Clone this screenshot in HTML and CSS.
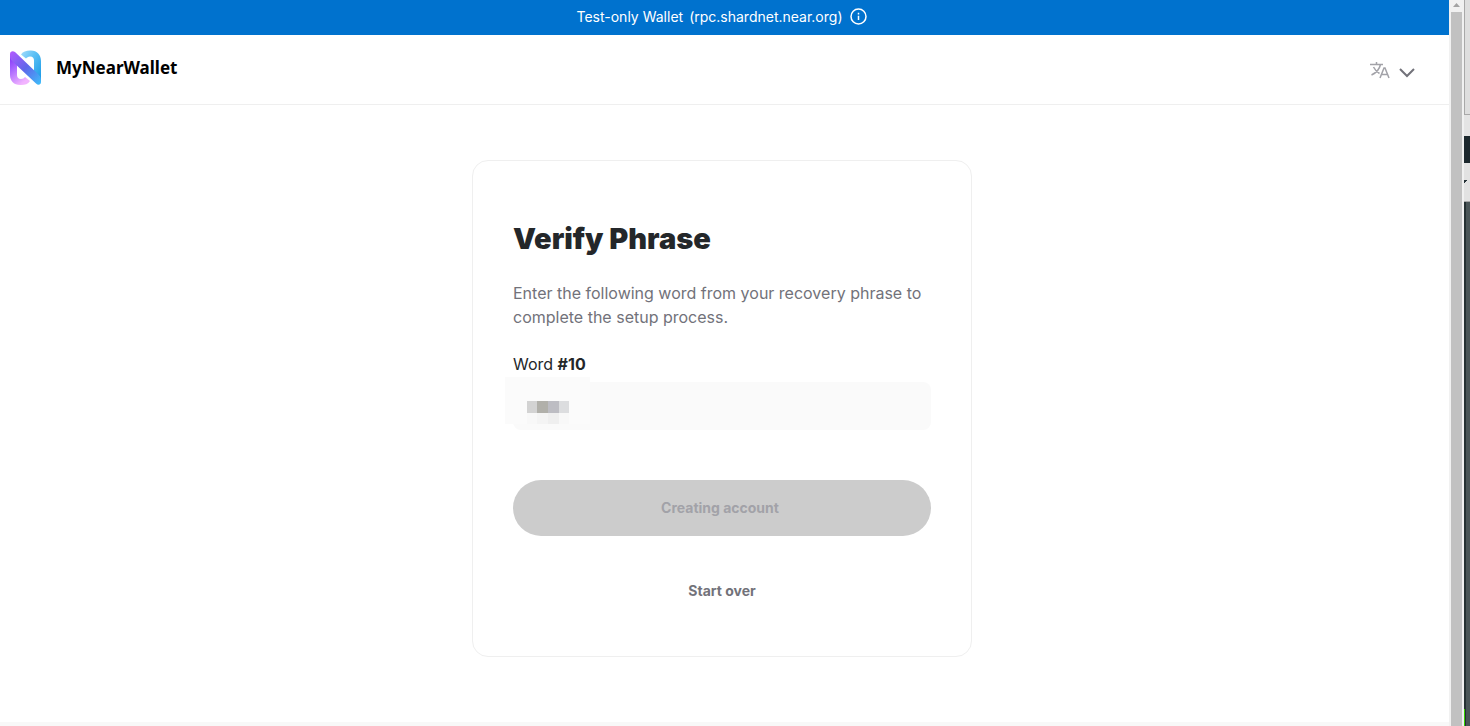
FILE: index.html
```html
<!DOCTYPE html>
<html lang="en">
<head>
<meta charset="utf-8">
<title>MyNearWallet</title>
<link rel="stylesheet" href="styles.css">
</head>
<body>
<div class="window">
  <div class="page">
    <div class="banner">
      <span>Test-only Wallet</span>
      <span>(rpc.shardnet.near.org)</span>
      <svg class="info" viewBox="0 0 18 18" fill="none" stroke="#fff" stroke-width="1.5"><circle cx="8.500" cy="8.500" r="7.500"/><path d="M8.500 7.700V12M8.500 4.800v1.600"/></svg>
    </div>
    <header class="header">
      <a class="brand" href="#">
        <svg class="logo" viewBox="0 0 32 36">
          <defs>
            <linearGradient id="pink" x1="0" y1="0" x2=".5" y2="1"><stop offset="0" stop-color="#7a2cf5"/><stop offset=".45" stop-color="#a968ff"/><stop offset="1" stop-color="#f2b4ff"/></linearGradient>
            <linearGradient id="sky" x1="0" y1="0" x2="1" y2="1"><stop offset="0" stop-color="#a5dcfb"/><stop offset=".4" stop-color="#5bc0f5"/><stop offset="1" stop-color="#1597e5"/></linearGradient>
            <linearGradient id="bar" x1="0" y1="0" x2="1" y2="1"><stop offset="0" stop-color="#b45bff"/><stop offset=".5" stop-color="#5f66ea"/><stop offset="1" stop-color="#3cc0fa"/></linearGradient>
          </defs>
          <path fill="url(#pink)" d="M0 4v21c0 6 4 10 10 10h1c4 0 7-1 9-4l-5-4c-1 1-2 2-4 2-3 0-4-2-4-4V10z"/>
          <path fill="url(#sky)" d="M31 32V11c0-6-4-10.500-10-10.500h-1c-4 0-7 1-9 4l5 4c1-1 2-2 4-2 3 0 4 2 4 4v16z"/>
          <path fill="url(#bar)" d="M0 4c0-3 3-3.500 5-2l24 23c2 2 2 4 2 7 0 3-3 3.500-5 1.500L2 11C0 9 0 7 0 4z"/>
        </svg>
        <span>MyNearWallet</span>
      </a>
      <button class="language" aria-label="Language">
        <svg class="translate" viewBox="0 0 20 18" fill="none" stroke="#a2a2a8" stroke-width="1.500"><path d="M0 3.500h13M6.500 1v2.500M10.500 3.500C9.500 8 6 12 1.500 14M3.500 6c1.500 3 3.500 5 6 6.500M10 17l4-10h1l4 10M11.500 13.500h6"/></svg>
        <svg class="chevron" viewBox="0 0 16 10" fill="none" stroke="#72727a" stroke-width="2"><path d="M1 1l7 7 7-7"/></svg>
      </button>
    </header>
    <main class="main">
      <form class="card">
        <h1>Verify Phrase</h1>
        <p>Enter the following word from your recovery phrase to complete the setup process.</p>
        <label for="word">Word <b>#10</b></label>
        <div class="field">
          <input id="word" type="text">
          <svg class="mosaic" viewBox="0 0 85 47" shape-rendering="crispEdges"><path fill="#fbfbfb" d="M0 0h85v47H0z"/><path fill="#d3d3d3" d="M22 24h10v12H22z"/><path fill="#b1b0aa" d="M32 24h11v12H32z"/><path fill="#bdbdc3" d="M43 24h11v12H43z"/><path fill="#dcdddf" d="M54 24h10v12H54z"/><path fill="#f8f8f8" d="M22 36h42v11H22z"/><path fill="#f4f4f4" d="M32 36h11v11H32z"/><path fill="#efefef" d="M43 36h11v11H43z"/></svg>
        </div>
        <button class="submit" type="submit" disabled>Creating account</button>
        <button class="restart" type="button">Start over</button>
      </form>
    </main>
    <footer class="footer"></footer>
  </div>
  <div class="scrollbar">
    <svg class="up" viewBox="0 0 11 12"><path fill="#a3a3a3" d="M2 7l3.500-4L9 7z"/></svg>
    <div class="thumb"></div>
  </div>
  <div class="desktop">
    <div class="titlebar"></div>
    <div class="toolbar"></div>
    <div class="tabs"></div>
    <div class="menu"><svg viewBox="0 0 6 38"><path fill="#263238" d="M0 17h3v1H2v1H1v1H0z"/></svg></div>
    <div class="terminal"></div>
    <div class="prompt"></div>
  </div>
</div>
</body>
</html>
```
FILE: styles.css
```css
* { box-sizing: border-box; }
body { margin: 0; font-family: Inter, "Liberation Sans", sans-serif; color: #24272a; background: #fff; }
button { border: 0; background: none; font-family: inherit; cursor: pointer; }
svg { display: block; }

.window { display: flex; height: 100vh; overflow: hidden; }
.page { flex: 1; display: flex; flex-direction: column; }

.banner {
  display: flex; align-items: center; justify-content: center; gap: 6px;
  height: 35px; padding: 0 5px 2px 0;
  background: #0072ce; color: #fff; font-size: 14px;
}
.info { width: 18px; height: 18px; margin-left: 1px; }

.header {
  display: flex; align-items: center; justify-content: space-between;
  height: 70px; padding: 0 34px 0 10px; border-bottom: 1px solid #efefef;
}
.brand {
  display: flex; align-items: center; gap: 14px; padding-bottom: 4px;
  color: #000; text-decoration: none; font: 700 17px/24px "Noto Sans", sans-serif;
}
.logo { width: 32px; height: 36px; }
.language { display: flex; align-items: center; gap: 9px; padding: 0; }
.translate { width: 20px; height: 18px; }
.chevron { width: 16px; height: 10px; margin-top: 6px; }

.main { flex: 1; display: flex; justify-content: center; align-items: flex-start; padding: 55px 5px 0 0; }
.card {
  display: flex; flex-direction: column;
  width: 500px; padding: 56px 40px 54px;
  border: 1px solid #efefef; border-radius: 16px;
}
h1 { margin: 0; font-size: 29px; line-height: 44px; font-weight: 900; }
p { margin: 20px 0 0; font-size: 16px; line-height: 24px; color: #72727a; }
label { margin-top: 24px; font-size: 16px; line-height: 22px; }
.field { position: relative; margin-top: 7px; }
input {
  display: block; width: 100%; height: 48px; padding: 0 12px;
  border: 0; border-radius: 8px; background: #fafafa; font: 16px Inter, sans-serif;
}
.mosaic { position: absolute; left: -8px; top: -5px; width: 85px; height: 47px; pointer-events: none; }
.submit {
  height: 56px; margin-top: 50px; padding: 0 4px 2px 0; border-radius: 28px;
  background: #ccc; color: #a2a2a8; font-size: 14px; font-weight: 700;
}
.restart { margin-top: 44px; padding: 0; font-size: 14px; line-height: 22px; font-weight: 700; color: #72727a; }
.footer { height: 4px; background: #f8f8f8; }

.scrollbar { display: flex; flex-direction: column; width: 15px; padding: 0 2px; background: #f1f1f1; }
.up { width: 11px; height: 12px; }
.thumb { flex: 1; background: #c1c1c1; }

.desktop { display: flex; flex-direction: column; width: 6px; }
.titlebar { height: 115px; background: #dedede; border-left: 1px solid #a8a8a8; border-bottom: 1px solid #a8a8a8; }
.toolbar { height: 21px; background: #e4e4e4; }
.tabs { height: 27px; background: #1c282d; }
.menu { height: 39px; background: #e2e2e2; border-bottom: 1px solid #a8a8a8; }
.terminal { flex: 1; background: #4b5658; border-left: 2px solid #263133; }
.prompt { height: 17px; background: #4b5658; border-left: 1px solid #35d200; box-shadow: inset 1px 0 #263133; }
```
